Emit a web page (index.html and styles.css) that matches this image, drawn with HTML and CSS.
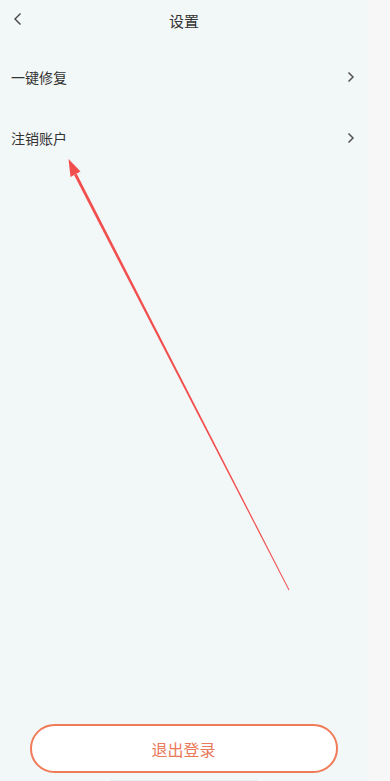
FILE: index.html
```html
<!DOCTYPE html>
<html lang="zh-CN">
<head>
  <meta charset="UTF-8">
  <meta name="viewport" content="width=device-width, initial-scale=1.0">
  <title>设置</title>
  <link rel="stylesheet" href="styles.css">
</head>
<body>
  <div class="screen">
    <div class="nav-bar">
      <span class="back-btn">
        <svg width="10" height="14" viewBox="0 0 10 14"><path d="M7.5 1.5 L2 7 L7.5 12.5" fill="none" stroke="#444" stroke-width="1.4"/></svg>
      </span>
      <span class="nav-title">设置</span>
    </div>

    <div class="menu-list">
      <div class="menu-item">
        <span>一键修复</span>
        <svg class="chevron" width="8" height="12" viewBox="0 0 8 12"><path d="M1.5 1.5 L6 6 L1.5 10.5" fill="none" stroke="#555" stroke-width="1.5"/></svg>
      </div>
      <div class="menu-item">
        <span>注销账户</span>
        <svg class="chevron" width="8" height="12" viewBox="0 0 8 12"><path d="M1.5 1.5 L6 6 L1.5 10.5" fill="none" stroke="#555" stroke-width="1.5"/></svg>
      </div>
    </div>

    <div class="bottom-area">
      <button class="logout-btn">退出登录</button>
      <div class="home-bar"></div>
    </div>
  </div>

  <!-- annotation arrow drawn over the screenshot -->
  <svg class="annotation" width="390" height="781" viewBox="0 0 390 781">
    <polygon points="289.4,589.8 288.6,590.2 74.1,175.1 76.7,173.7" fill="#f24e4e"/>
    <polygon points="68.5,159 80.5,171.5 70.5,177" fill="#f24e4e"/>
  </svg>
</body>
</html>
```

FILE: styles.css
```css
body {
  margin: 0;
  background-color: #f7f7f7;
  font-family: 'Noto Sans CJK SC', 'Noto Sans', sans-serif;
  color: #333;
}

.screen {
  width: 368px;
  min-height: 781px;
  background-color: #f2f7f7;
  display: flex;
  flex-direction: column;
}

.nav-bar {
  height: 40px;
  display: flex;
  align-items: center;
  justify-content: center;
  position: relative;
}

.back-btn {
  position: absolute;
  left: 13px;
  top: 12px;
  display: flex;
}

.nav-title {
  font-size: 15px;
  color: #333;
}

.menu-list {
  display: flex;
  flex-direction: column;
  padding-top: 6px;
}

.menu-item {
  height: 61px;
  display: flex;
  align-items: center;
  justify-content: space-between;
  padding: 0 13px 0 11px;
  font-size: 14px;
  color: #333;
}

.bottom-area {
  margin-top: auto;
  display: flex;
  flex-direction: column;
  align-items: center;
}

.logout-btn {
  width: 308px;
  height: 49px;
  margin-left: -1px;
  border: 2px solid #f07b58;
  border-radius: 25px;
  background-color: #fff;
  color: #e97a5a;
  font-family: 'Noto Sans CJK SC', sans-serif;
  font-size: 16px;
  cursor: pointer;
}

.home-bar {
  width: 148px;
  height: 1px;
  margin-top: 7px;
  background-color: #e6ecee;
}

.annotation {
  position: absolute;
  left: 0;
  top: 0;
  pointer-events: none;
}
```
